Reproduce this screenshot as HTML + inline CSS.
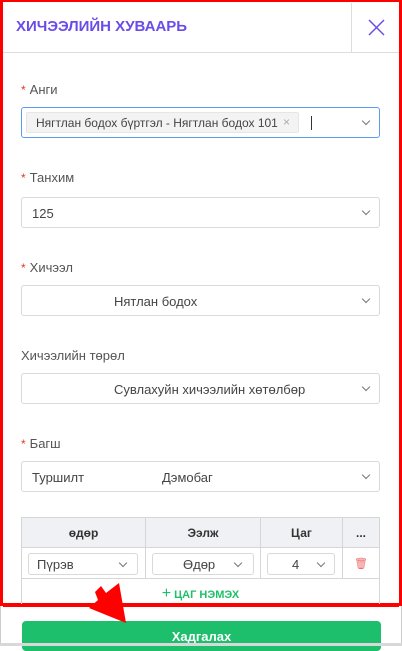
<!DOCTYPE html>
<html><head><meta charset="utf-8"><style>
*{box-sizing:border-box;margin:0;padding:0}
body{width:402px;height:646px;overflow:hidden;background:#fff;font-family:"Liberation Sans",sans-serif;position:relative;color:#333}
.abs{position:absolute}
.lbl{position:absolute;left:21px;font-size:13px;color:#555}
.lbl b{color:#e03a2e;font-weight:normal;margin-right:4px;font-size:12px}
.sel{position:absolute;left:21px;width:359px;height:31px;border:1px solid #d9d9d9;border-radius:3px;font-size:13px;color:#444;white-space:nowrap}
.chev{position:absolute;width:6px;height:6px;border-right:1.2px solid #777;border-bottom:1.2px solid #777;transform:rotate(45deg)}
td,th{border:1px solid #d6d6d6}
</style></head><body>
<div class="abs" style="left:0;top:0;width:402px;height:606px;border:3px solid #f00;border-top-width:2px;border-right-width:3px"></div>
<div class="abs" style="left:16px;top:18px;font-size:15px;font-weight:bold;color:#6a4de8">ХИЧЭЭЛИЙН ХУВААРЬ</div>
<div class="abs" style="left:351px;top:3px;width:1px;height:49px;background:#ddd"></div>
<div class="abs" style="left:3px;top:52px;width:396px;height:1px;background:#ddd"></div>
<svg class="abs" style="left:368px;top:19px" width="17" height="17"><path d="M1 1L16 16M16 1L1 16" stroke="#6a4de8" stroke-width="1.5"/></svg>

<div class="lbl" style="top:82px"><b>*</b>Анги</div>
<div class="sel" style="top:107px;border-color:#5b9cf0">
 <div class="abs" style="left:4px;top:4px;width:273px;height:21px;background:#f3f3f3;border:1px solid #e6e6e6;border-radius:2px;padding:3px 0 0 9px;font-size:12px;color:#444;white-space:nowrap">Нягтлан бодох бүртгэл - Нягтлан бодох 101<span style="position:absolute;left:256px;top:2px;color:#aaa">×</span></div>
 <div class="abs" style="left:289px;top:8px;width:1px;height:14px;background:#333"></div>
 <div class="chev" style="left:341px;top:10px"></div></div>

<div class="lbl" style="top:170px"><b>*</b>Танхим</div>
<div class="sel" style="top:197px;padding:8px 10px">125<div class="chev" style="left:341px;top:10px"></div></div>

<div class="lbl" style="top:260px"><b>*</b>Хичээл</div>
<div class="sel" style="top:285px;padding:8px 0 0 92px">Нятлан бодох<div class="chev" style="left:341px;top:10px"></div></div>

<div class="lbl" style="top:348px">Хичээлийн төрөл</div>
<div class="sel" style="top:373px;padding:8px 0 0 92px">Сувлахуйн хичээлийн хөтөлбөр<div class="chev" style="left:341px;top:10px"></div></div>

<div class="lbl" style="top:436px"><b>*</b>Багш</div>
<div class="sel" style="top:461px;padding:8px 10px">Туршилт<span style="position:absolute;left:140px">Дэмобаг</span><div class="chev" style="left:341px;top:10px"></div></div>

<table class="abs" style="left:21px;top:517px;width:359px;border-collapse:collapse;font-size:12px">
<tr style="height:30px;background:#f0f1f4"><th style="width:124px">өдөр</th><th style="width:115px">Ээлж</th><th style="width:82px">Цаг</th><th>...</th></tr>
<tr style="height:31px"><td style="position:relative"><div class="sel" style="left:6px;top:5px;width:110px;height:22px;padding:3px 8px">Пүрэв<div class="chev" style="left:91px;top:6px"></div></div></td>
<td style="position:relative"><div class="sel" style="left:6px;top:5px;width:102px;height:22px;padding:3px 0 0 30px">Өдөр<div class="chev" style="left:82px;top:6px"></div></div></td>
<td style="position:relative"><div class="sel" style="left:6px;top:5px;width:68px;height:22px;padding:3px 0 0 24px">4<div class="chev" style="left:50px;top:6px"></div></div></td>
<td style="text-align:center;color:#f06a6a;font-size:11px">🗑</td></tr>
<tr style="height:30px"><td colspan="4" style="text-align:center;color:#1fbf6a;font-weight:bold;font-size:11px"><span style="font-size:16px;font-weight:normal">+</span> ЦАГ НЭМЭХ</td></tr>
</table>
<div class="abs" style="left:0;top:606px;width:402px;height:40px;background:#fff;border-left:1px solid #ccc;border-right:1px solid #ccc"></div>
<div class="abs" style="left:3px;top:604px;width:396px;height:3px;background:#f00"></div>
<div class="abs" style="left:22px;top:621px;width:359px;height:30px;background:#1dbf6d;border-radius:4px;color:#fff;font-size:13px;font-weight:bold;text-align:center;padding-top:8px">Хадгалах</div>
<div class="abs" style="left:0;top:643px;width:402px;height:3px;background:#d8d8d8"></div>
<svg class="abs" style="left:0;top:0" width="402" height="646"><polygon points="126,623 89,608 98,600 95,592 101,586 106,593 119,583" fill="#f00"/></svg>
</body></html>
